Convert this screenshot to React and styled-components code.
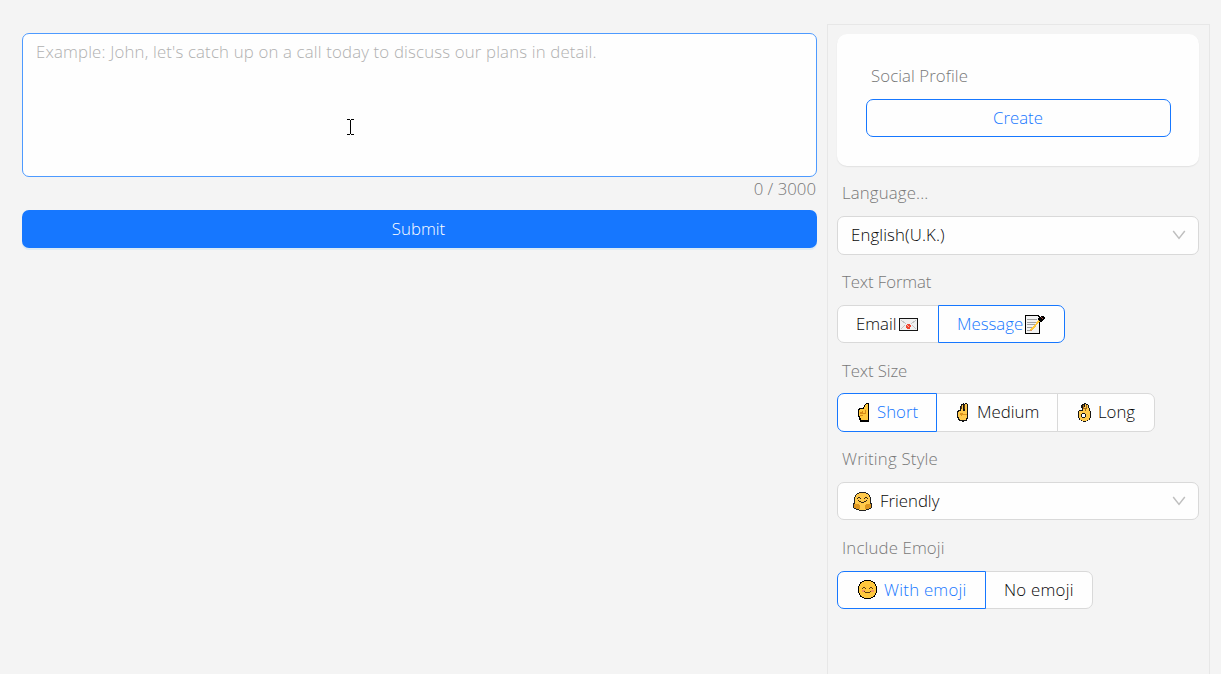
import React from "react";
import styled, { createGlobalStyle } from "styled-components";

const Global = createGlobalStyle`
  * { box-sizing: border-box; }
  html, body { margin: 0; height: 100%; overflow: hidden; background: #f4f4f4; }
  body, button, textarea {
    font-family: "Open Sans", "Noto Sans", sans-serif;
    font-size: 16.8px;
    font-weight: 300;
  }
`;

const Page = styled.div`
  display: flex;
  align-items: flex-start;
  gap: 10px;
  height: 674px;
  padding: 24px 11px 0 22px;
  overflow: hidden;
  color: #080808;
  position: relative;
`;

const Main = styled.main`
  width: 795px;
  padding-top: 9px;
  display: flex;
  flex-direction: column;
`;

const Message = styled.textarea`
  display: block;
  width: 100%;
  height: 144px;
  margin: 0;
  padding: 5px 13px;
  border: 1px solid #4d9aff;
  border-radius: 7px;
  background: #fefefe;
  outline: none;
  resize: none;
  line-height: 26px;
  letter-spacing: ${(p) => p.$track}px;
  &::placeholder { color: #b0b0b0; opacity: 1; }
`;

const Counter = styled.div`
  height: 33px;
  padding-right: 1px;
  line-height: 24px;
  text-align: right;
  color: #787878;
`;

const Submit = styled.button`
  height: 38px;
  padding: 0 2px 2px 0;
  border: 0;
  border-radius: 7px;
  background: #1677ff;
  box-shadow: 0 2px 0 rgba(5, 145, 255, 0.1);
  color: #fff;
`;

const Sidebar = styled.aside`
  width: 383px;
  height: 670px;
  padding: 9px 10px 0 9px;
  border: 1px solid #e7e7e7;
`;

const Card = styled.section`
  height: 131.875px;
  padding: 29px 28px 0 29px;
  border-radius: 10px;
  background: #fefefe;
  box-shadow: 0 1px 2px rgba(0, 0, 0, 0.05), 0 1px 1px rgba(0, 0, 0, 0.03);
`;

const CardTitle = styled.div`
  height: 36px;
  padding-left: 5px;
  line-height: 26px;
  color: #787878;
`;

const Create = styled.button`
  width: 100%;
  height: 38px;
  padding: 0 1px 2px 0;
  border: 1px solid #1677ff;
  border-radius: 7px;
  background: #fefefe;
  color: #1677ff;
`;

const Label = styled.div`
  height: 50.25px;
  padding: 14.4px 0 0 5px;
  line-height: 26px;
  color: #787878;
`;

const Select = styled.div`
  display: flex;
  align-items: center;
  height: 38.4px;
  padding: 0 12px 0 13px;
  border: 1px solid #d9d9d9;
  border-radius: 7px;
  background: #fefefe;
  svg:last-child { margin-left: auto; }
`;

const Group = styled.div`
  display: flex;
  height: 38.4px;
`;

const Option = styled.button`
  display: flex;
  align-items: center;
  width: ${(p) => p.$w}px;
  padding: 0 0 0 18px;
  margin: 0 0 0 -1px;
  border: 1px solid ${(p) => (p.$on ? "#1677ff" : "#d9d9d9")};
  background: #fefefe;
  color: ${(p) => (p.$on ? "#1677ff" : "#080808")};
  position: relative;
  z-index: ${(p) => (p.$on ? 1 : 0)};
  &:first-child { margin-left: 0; border-radius: 7px 0 0 7px; }
  &:last-child { border-radius: 0 7px 7px 0; }
`;

const Text = styled.span`
  letter-spacing: ${(p) => p.$track || 0}px;
  padding-bottom: ${(p) => (p.$raised ? 2 : 0)}px;
  white-space: nowrap;
`;

const Glyph = styled.svg`
  flex: none;
  display: block;
  margin: ${(p) => p.$m || "0"};
`;

const Cursor = styled.svg`
  position: absolute;
  left: 347px;
  top: 119px;
`;

const Chevron = () => (
  <Glyph width="14" height="10" viewBox="0 0 14 10" fill="none" stroke="#bfbfbf" strokeWidth="1.5">
    <path d="M1.2 1 L7 8.4 L12.8 1" />
  </Glyph>
);

const Envelope = () => (
  <Glyph width="19" height="13" viewBox="0 0 19 13" shapeRendering="crispEdges" $m="2px 0 0 2px">
    <rect width="19" height="13" fill="#151515" />
    <rect x="1" y="1" width="17" height="11" fill="#f0f0f0" />
    <path d="M2 2 L7 6 M17 2 L12 6 M2 11 L6 7 M17 11 L13 7" stroke="#c4c4c4" fill="none" />
    <path d="M8 6h3v1h1v2h-1v2H8v-1H7V7h1z" fill="#ef4631" />
    <path d="M9 8h1v1H9zM8 7h1v1H8z" fill="#f8b7a8" />
  </Glyph>
);

const Memo = () => (
  <Glyph width="20" height="19" viewBox="0 0 20 19" shapeRendering="crispEdges" $m="1px 0 0 2px">
    <path d="M0 0h14v1h1v18H0z" fill="#000" />
    <path d="M1 1h12v1h1v16H1z" fill="#f3f3f3" />
    <path d="M2 4.500h10M2 7.500h9M2 9.500h8M2 12.500h6M2 15.500h3" stroke="#a0a0a0" />
    <path d="M6 15 L16 4" stroke="#ffc83d" strokeWidth="2" />
    <path d="M5 15h2v1H5z" fill="#d79a60" />
    <path d="M13 3h1V2h2V1h3v1h1v2h-1v1h-1v1h-1v1h-2V6h-1V5h-1z" fill="#000" />
    <path d="M16 2h1v1h-1zM17 3h1v1h-1z" fill="#a34a43" />
  </Glyph>
);

const PointUp = () => (
  <Glyph width="12" height="19" viewBox="0 0 12 19" shapeRendering="crispEdges" $m="0 7px 0 2px">
    <path d="M8 0h3v19H2v-2H1v-3H0V6h1V5h4V4h1V2h1V1h1z" fill="#000" />
    <path d="M8 1h2v16H3v-2H2v-2H1V7h1V6h4V4h1V2h1z" fill="#ffc83d" />
    <path d="M2 9h2V8h1v2h3v1H2zM2 12h3v1H2zM7 7h1v3H7z" fill="#d68a16" />
  </Glyph>
);

const Victory = () => (
  <Glyph width="12" height="19" viewBox="0 0 12 19" shapeRendering="crispEdges" $m="0 8px 0 2px">
    <path d="M4 1h2V0h1v1h1V0h2v1h1v15h-1v2H7v1H5v-1H2v-1H1v-2H0V8h1V7h2V3h1z" fill="#151515" />
    <path d="M5 2h1v6h2V1h2v14H9v2H3v-1H2v-2H1V9h1V8h2V3h1z" fill="#ffc94b" />
    <path d="M4 3h1v3H4zM7 2h1v4H7z" fill="#5b3a12" />
    <path d="M3 10h3v1h4v1H5v1H4v-1H3z" fill="#dc941e" />
  </Glyph>
);

const OkHand = () => (
  <Glyph width="13" height="19" viewBox="0 0 13 19" shapeRendering="crispEdges" $m="0 7px 0 2px">
    <path d="M4 1h2V0h2v1h2v1h1v3h1v3h1v7h-1v2h-2v1H8v1H5v-1H3v-1H1v-2H0V8h1V7h3V5H3V2h1z" fill="#151515" />
    <path d="M5 2h1v2h1V1h1v1h2v3h1v3h1v7h-1v2H9v1H4v-1H2v-2H1V8h4V5h1V4H5z" fill="#ffc94b" />
    <path d="M5 2h1v3h2v3H7V6H5zM8 2h1v4H8z" fill="#a66a18" />
    <path d="M4 10h3v1h1v3H7v1H4v-1H3v-3h1z" fill="#151515" />
    <path d="M4 11h3v3H4z" fill="#fff" />
  </Glyph>
);

const facePath = "M6 0h7v1h2v1h2v2h1v2h1v7h-1v2h-1v2h-2v1h-2v1H6v-1H4v-1H2v-2H1v-2H0V6h1V4h1V2h2V1h2z";
const faceFill = "M6 1h7v1h2v1h1v1h1v2h1v7h-1v2h-1v1h-1v1h-2v1H6v-1H4v-1H3v-1H2v-2H1V6h1V4h1V3h1V2h2z";

const Hug = () => (
  <Glyph width="20" height="19" viewBox="0 0 20 19" shapeRendering="crispEdges" $m="0 7px 0 2px">
    <path d="M6 0h7v1h2v1h1v1h1v2h1v6h1v5h-1v1h-2v1h-3v1H6v-1H3v-1H1v-1H0v-5h1V5h1V3h1V2h1V1h2z" fill="#222" />
    <path d="M6 1h7v1h2v1h1v2h1v7h1v4h-2v1h-3v1H6v-1H3v-1H1v-4h1V5h1V3h1V2h2z" fill="#ffc94b" />
    <path d="M1 12h5v1h1v4H3v-1H1zM18 12h-5v1h-1v4h4v-1h2z" fill="#dc941e" />
    <path d="M4 6h1V5h2v1h1v1H7V6H5v1H4zM11 6h1V5h2v1h1v1h-1V6h-2v1h-1zM5 8h1v1H5zM13 8h1v1h-1zM6 9h2v1H6zM11 9h2v1h-2zM8 10h3v1H8z" fill="#332313" />
  </Glyph>
);

const Smile = () => (
  <Glyph width="19" height="19" viewBox="0 0 19 19" shapeRendering="crispEdges" $m="0 7px 0 2px">
    <path d={facePath} fill="#000" />
    <path d={faceFill} fill="#ffc83d" />
    <path d="M4 10h3v2H4zM13 10h3v2h-3z" fill="#f59662" />
    <path d="M4 8h1v1H4zM5 7h2v1H5zM7 8h1v1H7zM11 8h1v1h-1zM12 7h2v1h-2zM14 8h1v1h-1zM6 11h1v1H6zM12 11h1v1h-1zM7 12h5v1H7z" fill="#5b3b18" />
  </Glyph>
);

export default function App() {
  return (
    <>
      <Global />
      <Page>
        <Main>
          <Message
            $track={0.165}
            readOnly
            placeholder="Example: John, let's catch up on a call today to discuss our plans in detail."
          />
          <Counter><Text>0 / 3000</Text></Counter>
          <Submit><Text>Submit</Text></Submit>
        </Main>
        <Sidebar>
          <Card>
            <CardTitle><Text $track={0.08}>Social Profile</Text></CardTitle>
            <Create><Text>Create</Text></Create>
          </Card>
          <Label><Text $track={0.15}>Language...</Text></Label>
          <Select><Text $raised $track={0.12}>English(U.K.)</Text><Chevron /></Select>
          <Label><Text $track={-0.1}>Text Format</Text></Label>
          <Group>
            <Option $w={102}><Text>Email</Text><Envelope /></Option>
            <Option $w={127} $on><Text>Message</Text><Memo /></Option>
          </Group>
          <Label><Text $track={-0.12}>Text Size</Text></Label>
          <Group>
            <Option $w={100} $on><PointUp /><Text $raised>Short</Text></Option>
            <Option $w={122}><Victory /><Text $raised>Medium</Text></Option>
            <Option $w={98}><OkHand /><Text $raised>Long</Text></Option>
          </Group>
          <Label><Text $track={0.22}>Writing Style</Text></Label>
          <Select><Hug /><Text $raised>Friendly</Text><Chevron /></Select>
          <Label><Text $track={0.14}>Include Emoji</Text></Label>
          <Group>
            <Option $w={149} $on><Smile /><Text $track={0.25}>With emoji</Text></Option>
            <Option $w={108}><Text $track={0.25}>No emoji</Text></Option>
          </Group>
        </Sidebar>
        <Cursor width="7" height="16" viewBox="0 0 7 16" shapeRendering="crispEdges">
          <path d="M0 0h3v1H0zM4 0h3v1H4zM3 1h1v14H3zM0 15h3v1H0zM4 15h3v1H4z" fill="#000" />
        </Cursor>
      </Page>
    </>
  );
}
